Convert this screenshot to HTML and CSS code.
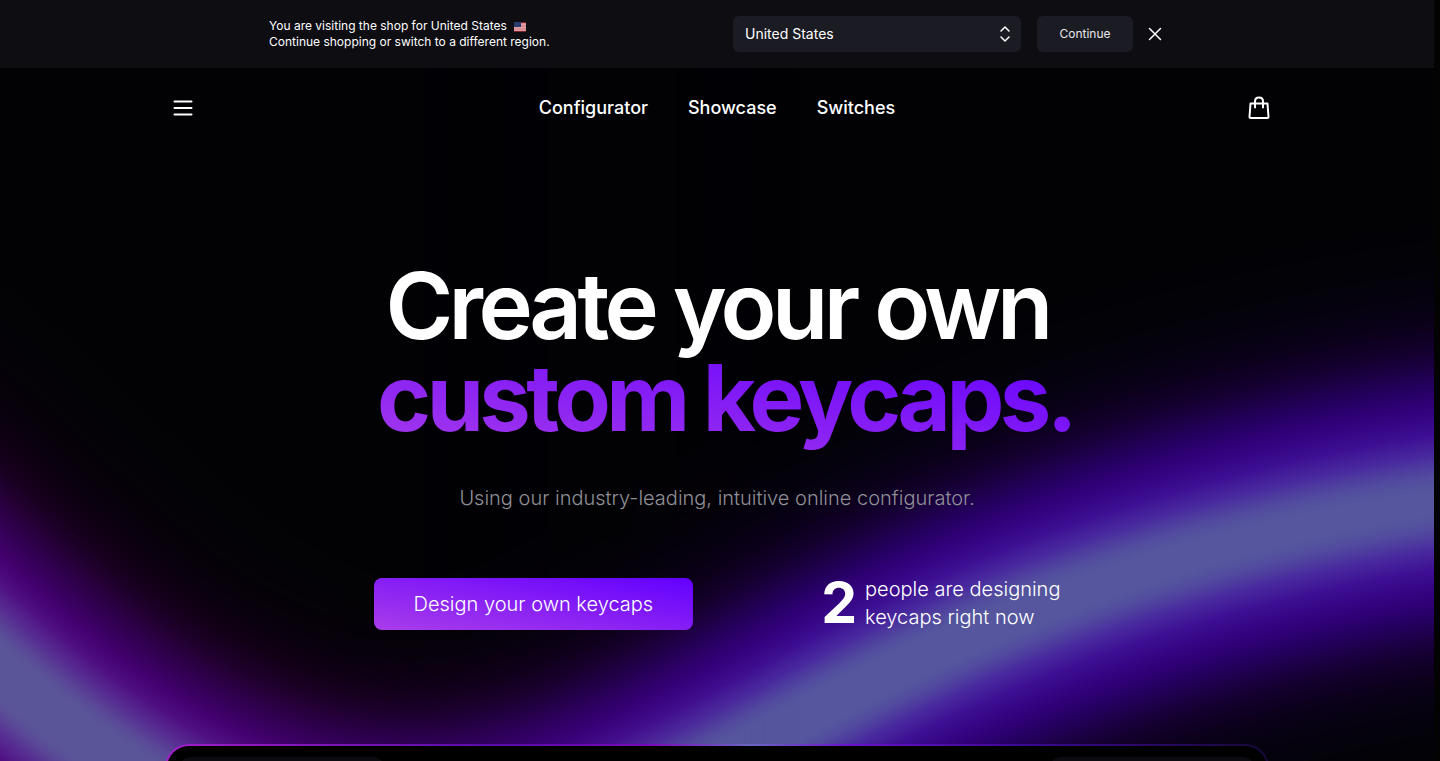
FILE: index.html
```html
<!DOCTYPE html>
<html lang="en">
<head>
    <meta charset="UTF-8">
    <meta name="viewport" content="width=device-width, initial-scale=1.0">
    <title>Custom keycaps</title>
    <link rel="stylesheet" href="styles.css">
</head>
<body>
    <div class="page">
        <!-- Glowing wave behind the page -->
        <svg class="glow" viewBox="0 0 1434 761" preserveAspectRatio="none" aria-hidden="true">
            <defs>
                <filter id="glow-blue" filterUnits="userSpaceOnUse" x="-400" y="-300" width="2300" height="1600" color-interpolation-filters="sRGB">
                    <feGaussianBlur stdDeviation="90" />
                    <feComponentTransfer>
                        <feFuncR type="table" tableValues=".01 .025 .05 .08 .115 .145 .18 .21 .24 .285 .335 .335 .335 .335 .335 .335 .335 .335 .335 .335 .335" />
                        <feFuncG type="table" tableValues=".01 .01 .003 0 0 0 0 .02 .06 .16 .34 .345 .345 .345 .345 .345 .345 .345 .345 .345 .345" />
                        <feFuncB type="table" tableValues=".02 .065 .12 .19 .285 .375 .455 .52 .58 .62 .62 .62 .62 .62 .62 .62 .62 .62 .62 .62 .62" />
                    </feComponentTransfer>
                </filter>
                <filter id="glow-purple" filterUnits="userSpaceOnUse" x="-400" y="-300" width="2300" height="1600" color-interpolation-filters="sRGB">
                    <feGaussianBlur stdDeviation="90" />
                    <feComponentTransfer>
                        <feFuncR type="table" tableValues=".01 .035 .07 .11 .15 .19 .23 .27 .31 .34 .355 .355 .355 .355 .355 .355 .355 .355 .355 .355 .355" />
                        <feFuncG type="table" tableValues=".01 .005 0 0 0 0 0 .01 .06 .17 .335 .335 .335 .335 .335 .335 .335 .335 .335 .335 .335" />
                        <feFuncB type="table" tableValues=".02 .05 .09 .15 .23 .31 .38 .45 .51 .57 .6 .6 .6 .6 .6 .6 .6 .6 .6 .6 .6" />
                    </feComponentTransfer>
                </filter>
                <linearGradient id="fade" gradientUnits="userSpaceOnUse" x1="300" y1="0" x2="800" y2="0">
                    <stop offset="0" stop-color="#fff" />
                    <stop offset="1" stop-color="#000" />
                </linearGradient>
                <mask id="left-side" maskUnits="userSpaceOnUse" x="0" y="0" width="1434" height="761">
                    <rect width="1434" height="761" fill="url(#fade)" />
                </mask>
                <g id="wave">
                    <rect x="-400" y="-300" width="2300" height="1600" fill="#000" />
                    <path d="M-300 420C-150 520 -60 620 0 675C28 700 55 723 83 745C220 842 330 872 430 868C560 862 660 798 760 742C900 660 1100 555 1434 500C1550 483 1700 478 1850 478" fill="none" stroke="#fff" stroke-width="120" />
                </g>
            </defs>
            <use href="#wave" filter="url(#glow-blue)" />
            <g mask="url(#left-side)">
                <use href="#wave" filter="url(#glow-purple)" />
            </g>
        </svg>

        <div class="region-bar">
            <div class="region-inner">
                <p class="region-text">
                    You are visiting the shop for United States
                    <svg class="flag" viewBox="0 0 12 10" aria-hidden="true">
                        <rect width="12" height="10" fill="#d98a90" />
                        <path d="M0 .5H12M0 9.5H12" stroke="#7c2433" />
                        <path d="M0 2.5H12M0 5.5H12M0 8H12" stroke="#e0a0a6" />
                        <rect width="7" height="5" fill="#263a6b" />
                    </svg>
                    <br>
                    Continue shopping or switch to a different region.
                </p>
                <form class="region-form">
                    <div class="select-wrap">
                        <select class="region-select" aria-label="Region">
                            <option>United States</option>
                            <option>Canada</option>
                            <option>Germany</option>
                        </select>
                        <svg class="select-icon" viewBox="0 0 12 18" aria-hidden="true">
                            <path d="M2 6L6 2L10 6M2 12L6 16L10 12" />
                        </svg>
                    </div>
                    <button class="continue" type="button">Continue</button>
                    <button class="close" type="button" aria-label="Close">
                        <svg viewBox="0 0 20 20"><path d="M4.500 4.500L15.500 15.500M15.500 4.500L4.500 15.500" /></svg>
                    </button>
                </form>
            </div>
        </div>

        <header class="header">
            <button class="icon-button" type="button" aria-label="Menu">
                <svg viewBox="0 0 32 32"><path d="M7.500 9.500H24.500M7.500 16H24.500M7.500 22.500H24.500" /></svg>
            </button>
            <nav class="nav">
                <a href="#configurator">Configurator</a>
                <a href="#showcase">Showcase</a>
                <a href="#switches">Switches</a>
            </nav>
            <a class="icon-button" href="#cart" aria-label="Cart">
                <svg viewBox="0 0 32 32"><path d="M7.500 11.500H24.500L25.500 25Q25.500 26 24.500 26H7.500Q6.500 26 6.500 25ZM12 15.500V9.500Q12 5.500 16 5.500T20 9.500V15.500" /></svg>
            </a>
        </header>

        <main class="hero">
            <h1 class="title">Create your own<br><span class="title-accent">custom keycaps.</span></h1>
            <p class="subtitle">Using our industry-leading, intuitive online configurator.</p>
            <div class="actions">
                <a class="cta" href="#configurator">Design your own keycaps</a>
                <div class="counter">
                    <strong>2</strong>
                    <span>people are designing<br>keycaps right now</span>
                </div>
            </div>
        </main>

        <section class="preview" aria-label="Configurator preview">
            <div class="preview-screen">
                <div class="panel"></div>
                <div class="panel"></div>
            </div>
        </section>
    </div>
</body>
</html>
```
FILE: styles.css
```css
* {
    box-sizing: border-box;
}

body {
    margin: 0;
    padding-right: 6px;
    background: #030304;
    color: #fff;
    font-family: Inter, "Liberation Sans", sans-serif;
}

button,
select {
    font-family: inherit;
    color: inherit;
    border: none;
    cursor: pointer;
}

a {
    color: inherit;
    text-decoration: none;
}

.page {
    position: relative;
    height: 100vh;
    overflow: hidden;
    isolation: isolate;
}

.glow {
    position: absolute;
    inset: 0;
    z-index: -1;
    width: 100%;
    height: 100%;
}

/* Region bar */
.region-bar {
    padding: 16px;
    background: #0d0d12;
}

.region-inner {
    display: flex;
    justify-content: space-between;
    align-items: center;
    max-width: 896px;
    margin: 0 auto;
}

.region-text {
    margin: 0;
    font-size: 12px;
    line-height: 16px;
}

.flag {
    width: 12px;
    height: 10px;
    margin-left: 4px;
    vertical-align: -2px;
}

.region-form {
    display: flex;
    align-items: center;
}

.select-wrap {
    position: relative;
}

.region-select {
    width: 288px;
    height: 36px;
    padding: 0 12px 2px;
    border-radius: 6px;
    background: #1b1b23;
    font-size: 14px;
    appearance: none;
}

.select-icon {
    position: absolute;
    top: 9px;
    right: 10px;
    width: 12px;
    height: 18px;
    pointer-events: none;
}

svg path {
    stroke-linecap: round;
    stroke-linejoin: round;
}

.select-icon path,
.close path {
    fill: none;
    stroke: #fff;
    stroke-width: 1.5;
}

.continue {
    width: 96px;
    height: 36px;
    margin: 0 12px 0 16px;
    padding: 0 0 2px;
    border-radius: 6px;
    background: #1b1b23;
    color: #e8e8ea;
    font-size: 12px;
}

.close {
    width: 20px;
    height: 20px;
    padding: 0;
    background: none;
}

.close svg,
.icon-button svg {
    display: block;
}

/* Header */
.header {
    display: flex;
    justify-content: space-between;
    align-items: center;
    max-width: 1116px;
    height: 80px;
    margin: 0 auto;
    padding-left: 8px;
}

.nav {
    display: flex;
    gap: 40px;
    margin-right: 8px;
    padding-bottom: 2px;
    font-size: 18px;
    font-weight: 500;
}

.icon-button {
    width: 32px;
    height: 32px;
    padding: 0;
    background: none;
}

.icon-button path {
    fill: none;
    stroke: #fff;
    stroke-width: 2;
}

/* Hero */
.hero {
    padding-top: 112px;
    text-align: center;
}

.title {
    margin: 0;
    font-size: 92px;
    line-height: 92px;
    font-weight: 600;
    letter-spacing: -0.05em;
}

.title-accent {
    display: inline-block;
    padding: 0 0 16px 16px;
    font-weight: 700;
    background: linear-gradient(to top right, #aa3dea, #6200ff);
    -webkit-background-clip: text;
    background-clip: text;
    color: transparent;
}

.subtitle {
    margin: 24px 0 0;
    color: #8f8f96;
    font-size: 20px;
    line-height: 28px;
    font-weight: 300;
}

.actions {
    display: flex;
    justify-content: center;
    align-items: center;
    gap: 128px;
    margin-top: 63px;
    font-size: 20px;
    line-height: 28px;
    font-weight: 300;
}

.cta {
    padding: 12px 40px;
    border-radius: 8px;
    background: linear-gradient(to top right, #aa3dea, #6200ff);
}

.counter {
    display: flex;
    align-items: center;
    gap: 8px;
    padding-bottom: 2px;
    text-align: left;
}

.counter strong {
    font-size: 57px;
    line-height: 56px;
    font-weight: 700;
}

/* Preview card */
.preview {
    max-width: 1104px;
    margin: 111px auto 0;
    padding: 2px;
    border-radius: 24px;
    background: linear-gradient(90deg, #a01ec8, #5a0aa8 30%, #7a08b8 44%, #6a66c0 53%, #6a10c8 62%, #3a0890 78%, #180838);
}

.preview-screen {
    display: flex;
    justify-content: space-between;
    height: 600px;
    padding: 11px 12px;
    border-radius: 22px;
    background: #000;
}

.panel {
    width: 206px;
    border-radius: 12px;
    background: #0c0c10;
}
```
